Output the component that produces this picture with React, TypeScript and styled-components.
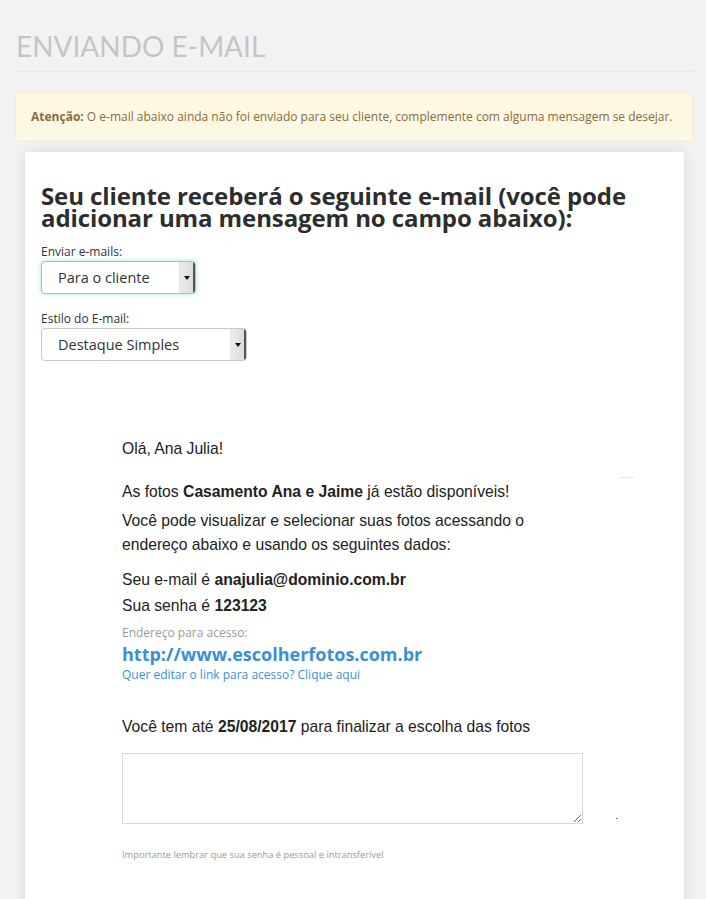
import React from 'react';
import styled, {createGlobalStyle} from 'styled-components';

const GlobalStyle = createGlobalStyle`
  html, body {
    margin: 0;
    padding: 0;
    background: #f2f2f2;
  }
  body {
    font-family: "Open Sans", "Liberation Sans", sans-serif;
    color: #333;
  }
`;

const Page = styled.div`
  width: 706px;
  height: 899px;
  overflow: hidden;
  padding: 0 13px 0 15px;
  box-sizing: border-box;
`;

const PageHeader = styled.div`
  margin: 0 -1px 0 -3px;
  padding: 32px 0 11px 4px;
  border-bottom: 1px solid #e8e8e8;
`;

const Title = styled.h1`
  margin: 0;
  font-family: "Lato", "Open Sans", sans-serif;
  font-weight: 400;
  font-size: 28px;
  line-height: 28px;
  letter-spacing: 0;
  color: #c5c5c5;
`;

const Alert = styled.div`
  margin-top: 20px;
  padding: 15px 15px 16px 15px;
  background: #fcf8e3;
  border: 1px solid #faebcc;
  border-radius: 4px;
  color: #8a6d3b;
  font-size: 12px;
  line-height: 17px;
  white-space: nowrap;
`;

const Card = styled.div`
  margin: 10px 9px 0 10px;
  background: #fff;
  box-shadow: 0 0 12px rgba(0, 0, 0, 0.1);
  padding: 33px 16px 40px 16px;
  min-height: 760px;
`;

const Heading = styled.h2`
  margin: 0 0 15px 0;
  font-size: 24px;
  font-weight: 700;
  line-height: 22px;
  color: #2d2d2d;
  letter-spacing: -0.1px;
`;

const Field = styled.div`
  margin-bottom: 17px;
`;

const Label = styled.div`
  font-size: 12px;
  line-height: 16px;
  margin-bottom: 1px;
  color: #333;
`;

const Select = styled.div<{ $width: number; $focus?: boolean }>`
  width: ${p => p.$width}px;
  height: 33px;
  box-sizing: border-box;
  display: flex;
  align-items: stretch;
  border: 1px solid ${p => (p.$focus ? '#7fd3c3' : '#c9c9c9')};
  border-radius: 4px;
  box-shadow: ${p => (p.$focus ? '0 0 5px rgba(110, 210, 190, 0.6)' : 'none')};
  overflow: hidden;
  background: #fff;
`;

const SelectText = styled.div`
  flex: 1;
  display: flex;
  align-items: center;
  padding-left: 16px;
  font-size: 14.5px;
  color: #333;
`;

const SelectArrow = styled.div`
  width: 13px;
  display: flex;
  align-items: center;
  justify-content: center;
  background: linear-gradient(to right, #ececec, #dcdcdc);
  border-left: 1px solid #e6e6e6;
  border-right: 2px solid #555;
  &::after {
    content: '';
    border-left: 3px solid transparent;
    border-right: 3px solid transparent;
    border-top: 4px solid #111;
  }
`;

const Email = styled.div`
  margin: 76px 0 0 81px;
  width: 520px;
  font-family: "Liberation Sans", Arial, sans-serif;
  font-size: 15.7px;
  color: #222;
  position: relative;
`;

const Para = styled.p<{ $gap?: number; $max?: number }>`
  margin: ${p => p.$gap ?? 0}px 0 0 0;
  max-width: ${p => (p.$max ? `${p.$max}px` : 'none')};
  line-height: 24px;
  b {
    font-weight: 700;
  }
`;

const Dash = styled.span`
  position: absolute;
  left: 498px;
  top: 40px;
  width: 14px;
  height: 1px;
  background: #e6e6e6;
`;

const Small = styled.div<{ $color: string; $gap?: number }>`
  margin-top: ${p => p.$gap ?? 0}px;
  font-family: "Open Sans", sans-serif;
  font-size: 12px;
  line-height: 16px;
  color: ${p => p.$color};
`;

const Url = styled.div`
  font-family: "Open Sans", sans-serif;
  font-size: 18px;
  font-weight: 700;
  line-height: 26px;
  color: #3b8fd9;
`;

const TextAreaRow = styled.div`
  margin-top: 14px;
  display: flex;
  align-items: flex-end;
`;

const TextArea = styled.textarea`
  flex-shrink: 0;
  width: 461px;
  height: 71px;
  box-sizing: border-box;
  border: 1px solid #d9d9d9;
  resize: vertical;
  outline: none;
  font-family: inherit;
`;

const Dot = styled.span`
  width: 2px;
  height: 1px;
  margin: 0 0 5px 33px;
  background: #777;
`;

const Footnote = styled.div`
  margin-top: 24px;
  font-family: "Open Sans", sans-serif;
  font-size: 9.3px;
  color: #999;
`;

export default function App() {
  return (
    <>
      <GlobalStyle/>
      <Page>
        <PageHeader>
          <Title>ENVIANDO E-MAIL</Title>
        </PageHeader>
        <Alert>
          <b>Atenção:</b> O e-mail abaixo ainda não foi enviado para seu cliente, complemente com alguma mensagem se desejar.
        </Alert>
        <Card>
          <Heading>Seu cliente receberá o seguinte e-mail (você pode adicionar uma mensagem no campo abaixo):</Heading>
          <Field>
            <Label>Enviar e-mails:</Label>
            <Select $width={155} $focus>
              <SelectText>Para o cliente</SelectText>
              <SelectArrow/>
            </Select>
          </Field>
          <Field>
            <Label>Estilo do E-mail:</Label>
            <Select $width={206}>
              <SelectText>Destaque Simples</SelectText>
              <SelectArrow/>
            </Select>
          </Field>
          <Email>
            <Dash/>
            <Para>Olá, Ana Julia!</Para>
            <Para $gap={19}>As fotos <b>Casamento Ana e Jaime</b> já estão disponíveis!</Para>
            <Para $gap={5} $max={420}>Você pode visualizar e selecionar suas fotos acessando o endereço abaixo e usando os seguintes dados:</Para>
            <Para $gap={11}>Seu e-mail é <b>anajulia@dominio.com.br</b></Para>
            <Para $gap={2}>Sua senha é <b>123123</b></Para>
            <Small $color="#9a9a9a" $gap={7}>Endereço para acesso:</Small>
            <Url>http://www.escolherfotos.com.br</Url>
            <Small $color="#3b8fd9">Quer editar o link para acesso? Clique aqui</Small>
            <Para $gap={32}>Você tem até <b>25/08/2017</b> para finalizar a escolha das fotos</Para>
            <TextAreaRow>
              <TextArea/>
              <Dot/>
            </TextAreaRow>
            <Footnote>Importante lembrar que sua senha é pessoal e intransferível</Footnote>
          </Email>
        </Card>
      </Page>
    </>
  );
}
